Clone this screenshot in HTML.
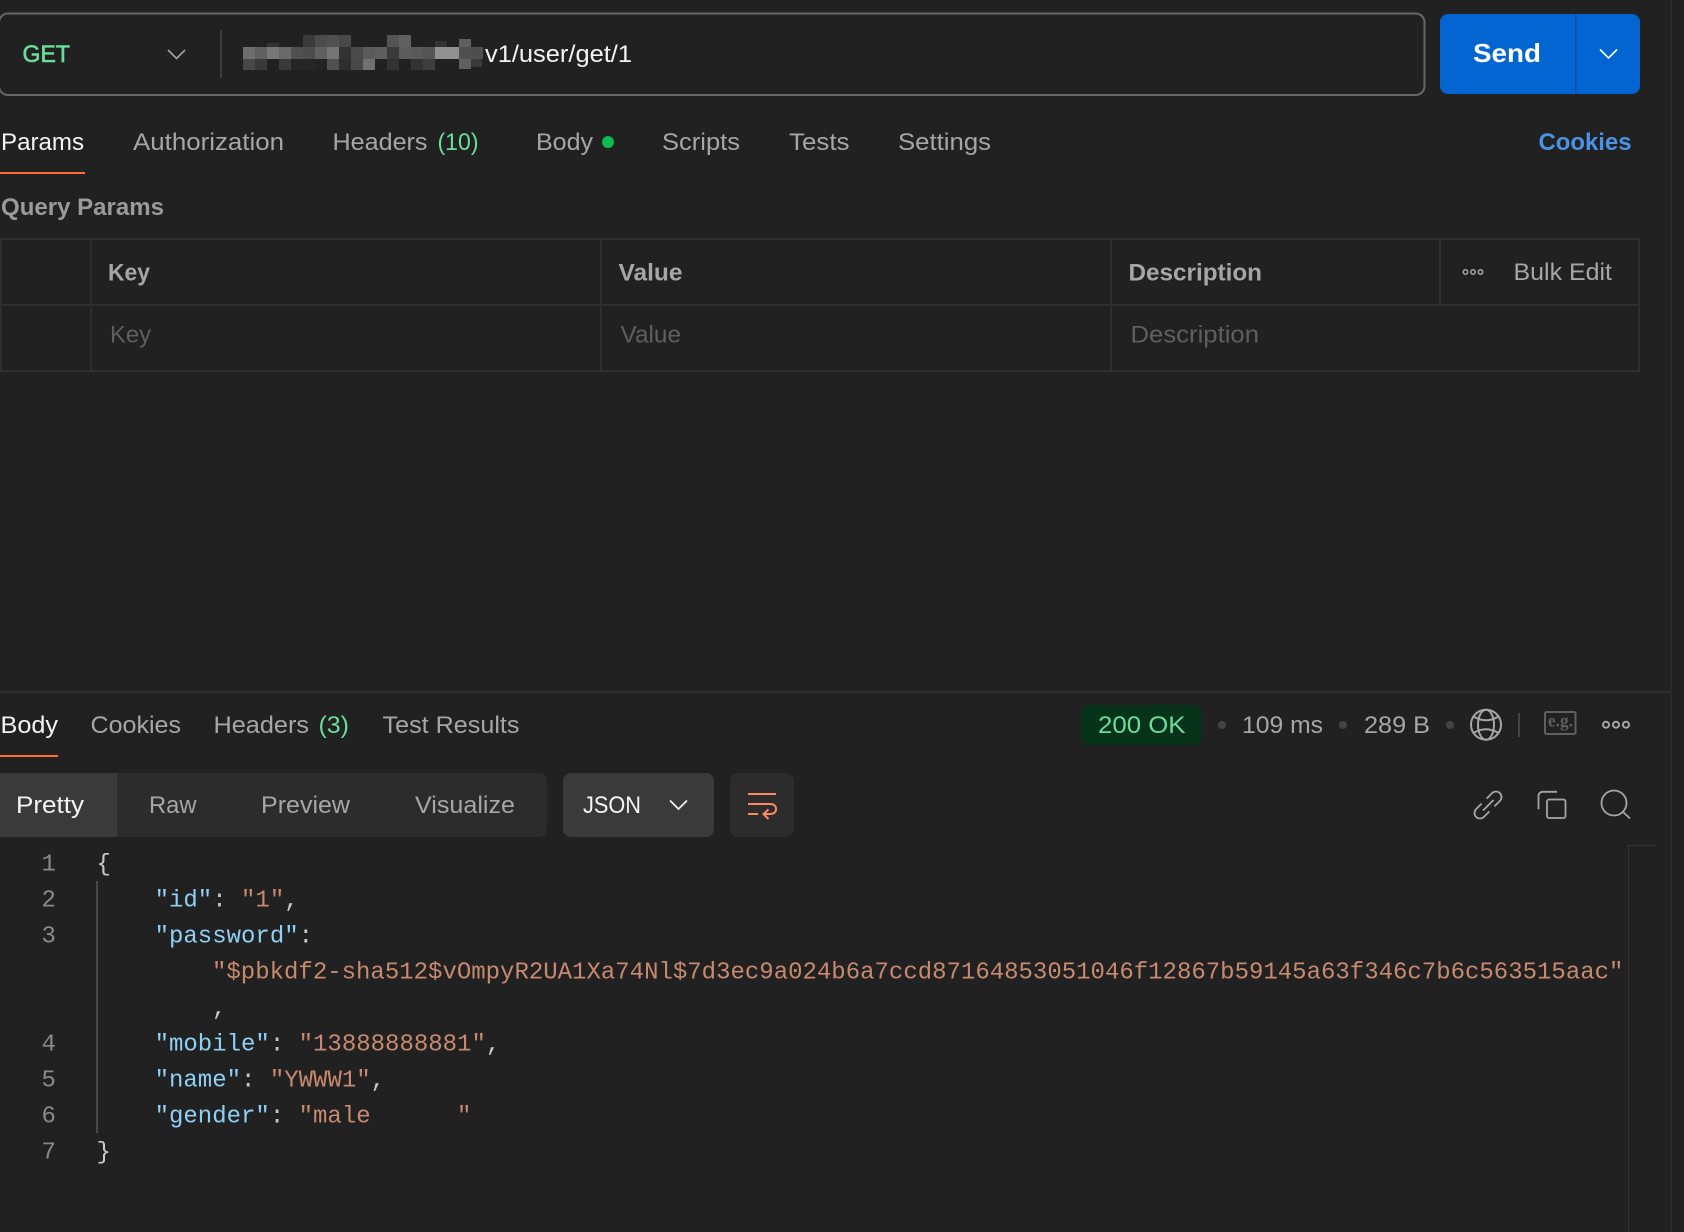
<!DOCTYPE html>
<html lang="en">
<head>
<meta charset="utf-8">
<title>Postman request</title>
<style>
html,body{margin:0;padding:0;background:#212121;width:1684px;height:1232px;overflow:hidden}
svg{display:block}
text{font-family:"Liberation Sans",sans-serif;font-size:24px;fill:#a6a6a6;white-space:pre}
.b{font-weight:700}
.w{fill:#f4f4f4}
.g{fill:#6bdd9a}
.ph{fill:#5f5f5f}
.m{font-family:"Liberation Mono",monospace;font-size:24px;fill:#c9c9c9}
.n{fill:#8a8a8a}
.k{fill:#8fd0f5}
.s{fill:#c88a6e}
.i{fill:none;stroke:#a6a6a6;stroke-width:1.800}
</style>
</head>
<body>
<svg xmlns="http://www.w3.org/2000/svg" width="1684" height="1232" viewBox="0 0 1684 1232">
<rect width="1684" height="1232" fill="#212121"/>

<!-- right pane line -->
<rect x="1670" y="0" width="2" height="1232" fill="#2b2b2b"/>

<!-- URL bar -->
<rect x="-1" y="13.500" width="1425.500" height="81.500" rx="9" fill="none" stroke="#666" stroke-width="2"/>
<text class="g" style="stroke:#6bdd9a;stroke-width:.6" x="22.500" y="62" textLength="47.500" lengthAdjust="spacingAndGlyphs">GET</text>
<path d="M168 50l8.500 8.500 8.500-8.500" fill="none" stroke="#a6a6a6" stroke-width="1.600"/>
<rect x="220" y="30" width="2" height="48" fill="#3a3a3a"/>

<!-- redacted URL mosaic -->
<g shape-rendering="crispEdges">
<rect x="267" y="43" width="12" height="4" fill="#333"/>
<rect x="303" y="35" width="12" height="12" fill="#3a3a3a"/>
<rect x="315" y="35" width="12" height="12" fill="#4c4c4c"/>
<rect x="327" y="35" width="12" height="12" fill="#505050"/>
<rect x="339" y="35" width="12" height="12" fill="#484848"/>
<rect x="387" y="35" width="12" height="12" fill="#555"/>
<rect x="399" y="35" width="12" height="12" fill="#606060"/>
<rect x="435" y="41" width="12" height="6" fill="#333"/>
<rect x="459" y="39" width="12" height="8" fill="#606060"/>
<rect x="243" y="47" width="12" height="12" fill="#6e6e6e"/>
<rect x="255" y="47" width="12" height="12" fill="#606060"/>
<rect x="267" y="47" width="12" height="12" fill="#777"/>
<rect x="279" y="47" width="12" height="12" fill="#6a6a6a"/>
<rect x="291" y="47" width="12" height="12" fill="#505050"/>
<rect x="303" y="47" width="12" height="12" fill="#4c4c4c"/>
<rect x="315" y="47" width="12" height="12" fill="#606060"/>
<rect x="327" y="47" width="12" height="12" fill="#747474"/>
<rect x="339" y="47" width="12" height="12" fill="#333"/>
<rect x="351" y="47" width="12" height="12" fill="#4a4a4a"/>
<rect x="363" y="47" width="12" height="12" fill="#5a5a5a"/>
<rect x="375" y="47" width="12" height="12" fill="#5e5e5e"/>
<rect x="387" y="47" width="12" height="12" fill="#3a3a3a"/>
<rect x="399" y="47" width="12" height="12" fill="#5c5c5c"/>
<rect x="411" y="47" width="12" height="12" fill="#5a5a5a"/>
<rect x="423" y="47" width="12" height="12" fill="#555"/>
<rect x="435" y="47" width="24" height="12" fill="#909090"/>
<rect x="459" y="47" width="12" height="12" fill="#505050"/>
<rect x="471" y="47" width="12" height="12" fill="#4e4e4e"/>
<rect x="243" y="59" width="12" height="11" fill="#484848"/>
<rect x="255" y="59" width="12" height="11" fill="#3a3a3a"/>
<rect x="279" y="59" width="12" height="11" fill="#3a3a3a"/>
<rect x="291" y="59" width="12" height="11" fill="#252525"/>
<rect x="303" y="59" width="12" height="11" fill="#262626"/>
<rect x="315" y="59" width="12" height="11" fill="#232323"/>
<rect x="327" y="59" width="12" height="11" fill="#505050"/>
<rect x="339" y="59" width="12" height="11" fill="#2e2e2e"/>
<rect x="351" y="59" width="12" height="11" fill="#484848"/>
<rect x="363" y="59" width="12" height="11" fill="#707070"/>
<rect x="387" y="59" width="12" height="11" fill="#333"/>
<rect x="411" y="59" width="12" height="11" fill="#333"/>
<rect x="423" y="59" width="12" height="11" fill="#3e3e3e"/>
<rect x="459" y="59" width="12" height="10" fill="#606060"/>
<rect x="471" y="59" width="11" height="8" fill="#3a3a3a"/>
</g>
<text class="w" x="485" y="62" textLength="147" lengthAdjust="spacingAndGlyphs">v1/user/get/1</text>

<!-- Send -->
<rect x="1440" y="14" width="200" height="80" rx="8" fill="#0265d2"/>
<rect x="1575" y="14" width="1.500" height="80" fill="#0b4f9e"/>
<text class="b" style="fill:#fff;font-size:26px" x="1473" y="62" textLength="68" lengthAdjust="spacingAndGlyphs">Send</text>
<path d="M1600 49.500l8.500 8.500 8.500-8.500" fill="none" stroke="#fff" stroke-width="1.600"/>

<!-- Request tabs -->
<text class="w" x="1" y="150" textLength="83" lengthAdjust="spacingAndGlyphs">Params</text>
<text x="133" y="150" textLength="151" lengthAdjust="spacingAndGlyphs">Authorization</text>
<text x="332.500" y="150" textLength="95" lengthAdjust="spacingAndGlyphs">Headers</text>
<text class="g" x="437.500" y="150" textLength="41" lengthAdjust="spacingAndGlyphs">(10)</text>
<text x="536" y="150" textLength="57" lengthAdjust="spacingAndGlyphs">Body</text>
<circle cx="608" cy="142" r="6" fill="#0cbb52"/>
<text x="662" y="150" textLength="78" lengthAdjust="spacingAndGlyphs">Scripts</text>
<text x="789" y="150" textLength="60.500" lengthAdjust="spacingAndGlyphs">Tests</text>
<text x="898" y="150" textLength="93" lengthAdjust="spacingAndGlyphs">Settings</text>
<text class="b" style="fill:#4a92e6" x="1538.500" y="150" textLength="93" lengthAdjust="spacingAndGlyphs">Cookies</text>
<rect x="0" y="172" width="85" height="2" fill="#ff6c37"/>

<text class="b" style="fill:#9a9a9a" x="1" y="215" textLength="163" lengthAdjust="spacingAndGlyphs">Query Params</text>

<!-- Table -->
<g fill="#2e2e2e" shape-rendering="crispEdges">
<rect x="0" y="238" width="1640" height="2"/>
<rect x="0" y="304" width="1640" height="2"/>
<rect x="0" y="370" width="1640" height="2"/>
<rect x="0" y="238" width="2" height="134"/>
<rect x="90" y="238" width="2" height="134"/>
<rect x="600" y="238" width="2" height="134"/>
<rect x="1110" y="238" width="2" height="134"/>
<rect x="1439" y="238" width="2" height="68"/>
<rect x="1638" y="238" width="2" height="134"/>
</g>
<text class="b" x="108" y="280.500" textLength="42" lengthAdjust="spacingAndGlyphs">Key</text>
<text class="b" x="618.500" y="280.500" textLength="64" lengthAdjust="spacingAndGlyphs">Value</text>
<text class="b" x="1128.500" y="280.500" textLength="133.500" lengthAdjust="spacingAndGlyphs">Description</text>
<text class="ph" x="110" y="342.500" textLength="41" lengthAdjust="spacingAndGlyphs">Key</text>
<text class="ph" x="620.500" y="342.500" textLength="60.500" lengthAdjust="spacingAndGlyphs">Value</text>
<text class="ph" x="1130.500" y="342.500" textLength="128.500" lengthAdjust="spacingAndGlyphs">Description</text>
<g fill="none" stroke="#a6a6a6" stroke-width="1.500">
<circle cx="1465.500" cy="272" r="2.200"/><circle cx="1473" cy="272" r="2.200"/><circle cx="1480.500" cy="272" r="2.200"/>
</g>
<text x="1513.500" y="280" textLength="98.500" lengthAdjust="spacingAndGlyphs">Bulk Edit</text>

<!-- Response divider -->
<rect x="0" y="691" width="1670" height="2" fill="#2e2e2e"/>

<!-- Response tabs -->
<text class="w" x="0.500" y="733" textLength="57.500" lengthAdjust="spacingAndGlyphs">Body</text>
<text x="90.500" y="733" textLength="90.500" lengthAdjust="spacingAndGlyphs">Cookies</text>
<text x="213.500" y="733" textLength="95.500" lengthAdjust="spacingAndGlyphs">Headers</text>
<text class="g" x="318.500" y="733" textLength="30.500" lengthAdjust="spacingAndGlyphs">(3)</text>
<text x="382.500" y="733" textLength="137" lengthAdjust="spacingAndGlyphs">Test Results</text>
<rect x="0" y="755" width="58" height="2" fill="#ff6c37"/>

<!-- Status -->
<rect x="1081" y="705" width="121" height="40" rx="8" fill="#07331a"/>
<text class="g" x="1098" y="733" textLength="87.500" lengthAdjust="spacingAndGlyphs">200 OK</text>
<circle cx="1222" cy="725" r="4" fill="#444"/>
<text x="1242" y="733" textLength="81" lengthAdjust="spacingAndGlyphs">109 ms</text>
<circle cx="1343" cy="725" r="4" fill="#444"/>
<text x="1364" y="733" textLength="66" lengthAdjust="spacingAndGlyphs">289 B</text>
<circle cx="1450" cy="725" r="4" fill="#444"/>
<!-- globe -->
<g class="i" style="stroke-width:2">
<circle cx="1486" cy="724.700" r="15"/>
<ellipse cx="1486" cy="724.700" rx="8" ry="15"/>
<path d="M1473.500 716.500Q1486 724 1498.500 716.500M1473.500 733Q1486 725.500 1498.500 733"/>
</g>
<rect x="1518" y="713" width="2" height="24" fill="#444"/>
<!-- e.g. -->
<rect x="1545" y="712" width="30.500" height="22" rx="1.500" fill="none" stroke="#5f5f5f" stroke-width="2"/>
<text style="font-family:'Liberation Serif',serif;font-weight:700;font-size:18px;fill:#5f5f5f" x="1548" y="726.500" textLength="25" lengthAdjust="spacingAndGlyphs">e.g.</text>
<g class="i" style="stroke-width:2">
<circle cx="1606" cy="724.700" r="3"/><circle cx="1616" cy="724.700" r="3"/><circle cx="1626" cy="724.700" r="3"/>
</g>

<!-- Sub tabs -->
<path d="M0 773H539a8 8 0 0 1 8 8v48a8 8 0 0 1-8 8H0z" fill="#2c2c2c"/>
<rect x="0" y="773" width="117" height="64" fill="#3a3a3a"/>
<text class="w" x="16" y="813" textLength="68" lengthAdjust="spacingAndGlyphs">Pretty</text>
<text x="149" y="813" textLength="47.500" lengthAdjust="spacingAndGlyphs">Raw</text>
<text x="261" y="813" textLength="89" lengthAdjust="spacingAndGlyphs">Preview</text>
<text x="415" y="813" textLength="100" lengthAdjust="spacingAndGlyphs">Visualize</text>
<rect x="563" y="773" width="151" height="64" rx="8" fill="#3a3a3a"/>
<text class="w" x="583" y="813" textLength="58" lengthAdjust="spacingAndGlyphs">JSON</text>
<path d="M670 800.500l8.500 8.500 8.500-8.500" fill="none" stroke="#eee" stroke-width="1.800"/>
<rect x="730" y="773" width="64" height="64" rx="8" fill="#2c2c2c"/>
<path d="M748 794h28M748 804h22c4 0 6 2 6 5s-2 5-6 5h-6M748 814h10M768.500 809.500l-5 4.500 5 5" fill="none" stroke="#ff8a60" stroke-width="2"/>

<!-- Action icons -->
<g class="i">
<path d="M1486.600 798.600L1492.100 793.100A5.500 5.500 0 0 1 1499.900 800.900L1494.400 806.400M1481.600 803.600L1476.100 809.100A5.500 5.500 0 0 0 1483.900 816.900L1489.400 811.400M1483 810.500L1493.500 800"/>
<path d="M1557 791.800h-14.500a4 4 0 0 0-4 4v13.500"/>
<rect x="1547" y="799.500" width="18.500" height="18.500" rx="2"/>
<circle cx="1614" cy="803" r="12.500"/>
<path d="M1622.500 811.500l7.500 7"/>
</g>

<!-- Scrollbar frame -->
<path d="M1656 845.500h-27.500V1232" fill="none" stroke="#333" stroke-width="1"/>

<!-- Code gutter -->
<text class="m n" x="41.500" y="870.500">1</text>
<text class="m n" x="41.500" y="906.500">2</text>
<text class="m n" x="41.500" y="942.500">3</text>
<text class="m n" x="41.500" y="1050.500">4</text>
<text class="m n" x="41.500" y="1086.500">5</text>
<text class="m n" x="41.500" y="1122.500">6</text>
<text class="m n" x="41.500" y="1158.500">7</text>
<rect x="96" y="881" width="2" height="252" fill="#484848"/>

<!-- Code -->
<text class="m" xml:space="preserve" x="96.500" y="870.500">{</text>
<text class="m" xml:space="preserve" x="154.600" y="906.500"><tspan class="k">"id"</tspan>: <tspan class="s">"1"</tspan>,</text>
<text class="m" xml:space="preserve" x="154.600" y="942.500"><tspan class="k">"password"</tspan>:</text>
<text class="m s" xml:space="preserve" x="212" y="978.500">"$pbkdf2-sha512$vOmpyR2UA1Xa74Nl$7d3ec9a024b6a7ccd87164853051046f12867b59145a63f346c7b6c563515aac"</text>
<text class="m" xml:space="preserve" x="212" y="1014.500">,</text>
<text class="m" xml:space="preserve" x="154.600" y="1050.500"><tspan class="k">"mobile"</tspan>: <tspan class="s">"13888888881"</tspan>,</text>
<text class="m" xml:space="preserve" x="154.600" y="1086.500"><tspan class="k">"name"</tspan>: <tspan class="s">"YWWW1"</tspan>,</text>
<text class="m" xml:space="preserve" x="154.600" y="1122.500"><tspan class="k">"gender"</tspan>: <tspan class="s">"male      "</tspan></text>
<text class="m" xml:space="preserve" x="96.500" y="1158.500">}</text>
</svg>
</body>
</html>
